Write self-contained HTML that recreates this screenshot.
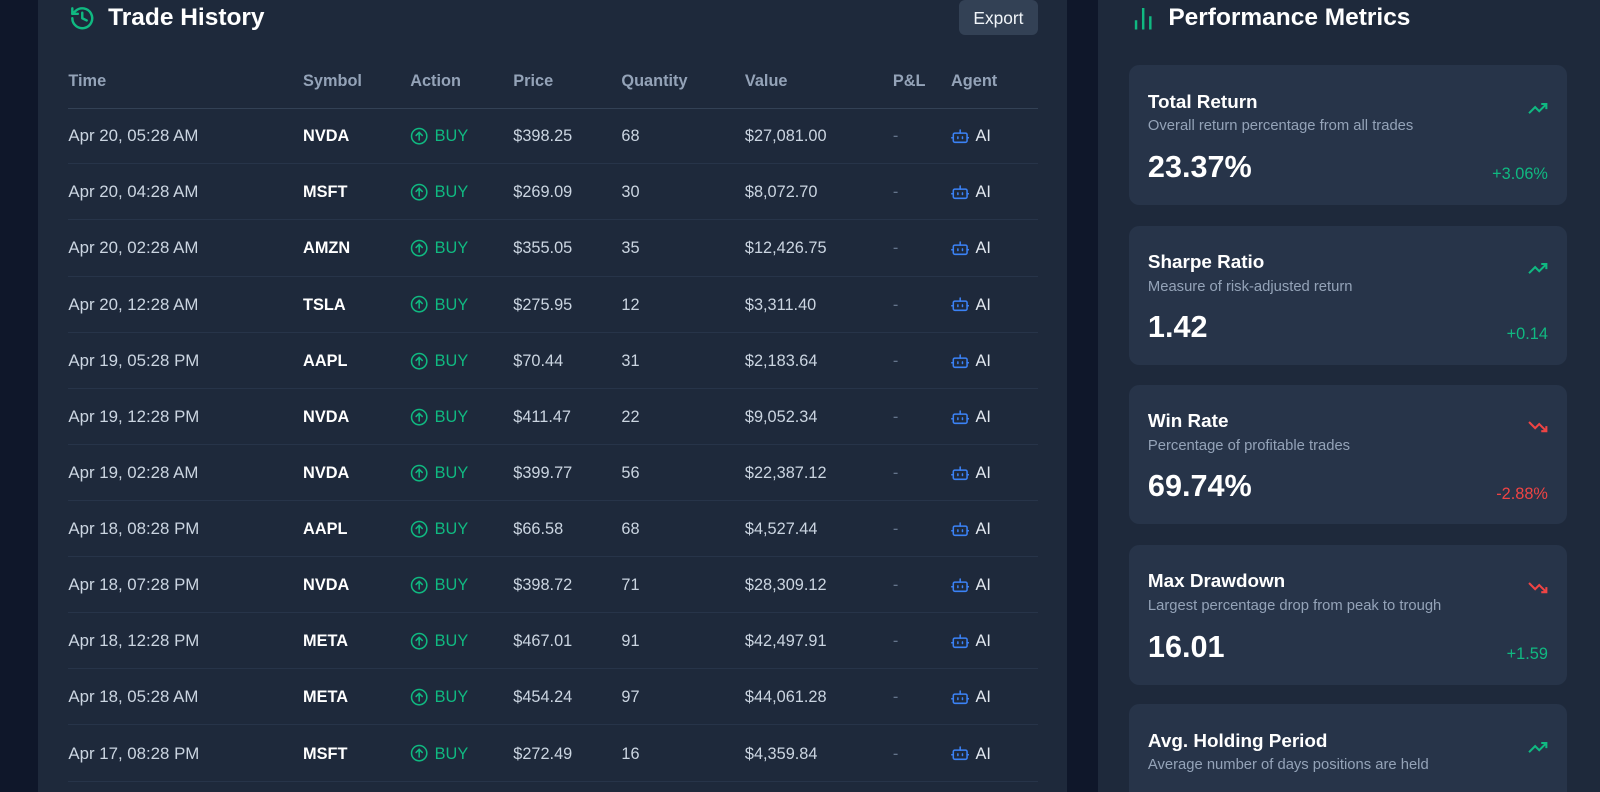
<!DOCTYPE html>
<html><head><meta charset="utf-8"><style>
*{box-sizing:border-box;margin:0;padding:0}
html,body{width:1600px;height:792px;overflow:hidden;background:#0f172a}
body{font-family:"Liberation Sans",sans-serif;color:#e2e8f0;position:relative}
#w{position:absolute;left:0;top:0;width:1568px;height:776px;zoom:1.0204;overflow:hidden}
.lp{position:absolute;left:37px;top:0;width:1009px;height:776px;background:#1e293b;overflow:hidden}
.rp{position:absolute;left:1076px;top:0;width:492px;height:776px;background:#1e293b;overflow:hidden}
h2{position:absolute;font-size:24px;font-weight:bold;color:#fff;top:4px}
.exp{position:absolute;left:903px;top:0;width:77px;height:34px;background:#334155;border-radius:6px;color:#f1f5f9;font-size:17px;text-align:center;line-height:36px}
.hd,.row{position:absolute;left:30px;width:950px;height:55px;font-size:16px}
.hd{top:52px;color:#94a3b8;font-weight:bold;border-bottom:1px solid #334155}
.row{border-bottom:1px solid #273449;color:#cbd5e1}
.c{position:absolute;top:0;line-height:55px;white-space:nowrap}
.t0{font-size:16.5px}
.sym{color:#fff;font-weight:bold}
.buy{color:#10b981;display:flex;align-items:center;gap:6px}
.ai{color:#e2e8f0;display:flex;align-items:center;gap:6px}
.pl{color:#64748b}
.card{position:absolute;left:30px;width:430px;height:137px;background:#273449;border-radius:10px}
.card .t{position:absolute;left:19px;top:25px;font-size:18.5px;font-weight:bold;color:#fff}
.card .s{position:absolute;left:19px;top:52px;font-size:14.5px;color:#94a3b8}
.card .v{position:absolute;left:19px;top:83px;font-size:30px;font-weight:bold;color:#fff}
.card .ch{position:absolute;right:19px;top:98px;font-size:16px}
.card svg{position:absolute;right:19px;top:36px}
</style></head><body><div id="w">
<div class="lp">
<svg style="position:absolute;left:31px;top:5px" width="26" height="26" viewBox="0 0 24 24" fill="none" stroke="#10b981" stroke-width="2.2" stroke-linecap="round" stroke-linejoin="round"><path d="M3 12a9 9 0 1 0 3-6.7L3 8"/><path d="M3 3v5h5"/><path d="M12 7v5l4 2"/></svg>
<h2 style="left:69px">Trade History</h2>
<div class="exp">Export</div>
<div class="hd"><span class="c" style="left:0">Time</span><span class="c" style="left:230px">Symbol</span><span class="c" style="left:335px">Action</span><span class="c" style="left:436px">Price</span><span class="c" style="left:542px">Quantity</span><span class="c" style="left:663px">Value</span><span class="c" style="left:808px">P&amp;L</span><span class="c" style="left:865px">Agent</span></div>
<div id="rows"></div>
</div>
<div class="rp">
<svg style="position:absolute;left:35px;top:6px" width="20" height="24" viewBox="0 0 20 24" stroke="#10b981" stroke-width="2.4"><path d="M2 14v9M9 2v21M16 10v13"/></svg>
<h2 style="left:69px">Performance Metrics</h2>
<div class="card" style="top:64px"><div class="t">Total Return</div><div class="s">Overall return percentage from all trades</div><div class="v">23.37%</div><div class="ch" style="color:#10b981">+3.06%</div><svg width="20" height="12" viewBox="0 0 20 12" fill="none" stroke="#10b981" stroke-width="2"><path d="M1 11l6-6 4 4 7-7M13 2h5v5"/></svg></div>
<div class="card" style="top:221px"><div class="t">Sharpe Ratio</div><div class="s">Measure of risk-adjusted return</div><div class="v">1.42</div><div class="ch" style="color:#10b981">+0.14</div><svg width="20" height="12" viewBox="0 0 20 12" fill="none" stroke="#10b981" stroke-width="2"><path d="M1 11l6-6 4 4 7-7M13 2h5v5"/></svg></div>
<div class="card" style="top:377px"><div class="t">Win Rate</div><div class="s">Percentage of profitable trades</div><div class="v">69.74%</div><div class="ch" style="color:#ef4444">-2.88%</div><svg width="20" height="12" viewBox="0 0 20 12" fill="none" stroke="#ef4444" stroke-width="2"><path d="M1 1l6 6 4-4 7 7M13 10h5V5"/></svg></div>
<div class="card" style="top:534px"><div class="t">Max Drawdown</div><div class="s">Largest percentage drop from peak to trough</div><div class="v">16.01</div><div class="ch" style="color:#10b981">+1.59</div><svg width="20" height="12" viewBox="0 0 20 12" fill="none" stroke="#ef4444" stroke-width="2"><path d="M1 1l6 6 4-4 7 7M13 10h5V5"/></svg></div>
<div class="card" style="top:690px"><div class="t">Avg. Holding Period</div><div class="s">Average number of days positions are held</div><svg width="20" height="12" viewBox="0 0 20 12" fill="none" stroke="#10b981" stroke-width="2"><path d="M1 11l6-6 4 4 7-7M13 2h5v5"/></svg></div>
</div>
</div>
<script>
const d=[["Apr 20, 05:28 AM","NVDA","$398.25","68","$27,081.00"],["Apr 20, 04:28 AM","MSFT","$269.09","30","$8,072.70"],["Apr 20, 02:28 AM","AMZN","$355.05","35","$12,426.75"],["Apr 20, 12:28 AM","TSLA","$275.95","12","$3,311.40"],["Apr 19, 05:28 PM","AAPL","$70.44","31","$2,183.64"],["Apr 19, 12:28 PM","NVDA","$411.47","22","$9,052.34"],["Apr 19, 02:28 AM","NVDA","$399.77","56","$22,387.12"],["Apr 18, 08:28 PM","AAPL","$66.58","68","$4,527.44"],["Apr 18, 07:28 PM","NVDA","$398.72","71","$28,309.12"],["Apr 18, 12:28 PM","META","$467.01","91","$42,497.91"],["Apr 18, 05:28 AM","META","$454.24","97","$44,061.28"],["Apr 17, 08:28 PM","MSFT","$272.49","16","$4,359.84"],["Apr 17, 06:28 PM","AAPL","$70.10","40","$2,804.00"]];
const up='<svg width="18" height="18" viewBox="0 0 24 24" fill="none" stroke="#10b981" stroke-width="2" stroke-linecap="round"><circle cx="12" cy="12" r="10"/><path d="M12 17V7M8 11l4-4 4 4"/></svg>';
const bot='<svg width="18" height="18" viewBox="0 0 24 24" fill="none" stroke="#3b82f6" stroke-width="2" stroke-linecap="round"><rect x="3" y="8" width="18" height="12" rx="2"/><path d="M12 8V4M9 13v2M15 13v2M1 14h2M21 14h2"/></svg>';
let h="";d.forEach((r,i)=>{h+=`<div class="row" style="top:${106+i*55}px"><span class="c t0" style="left:0">${r[0]}</span><span class="c sym" style="left:230px">${r[1]}</span><span class="c buy" style="left:335px">${up}BUY</span><span class="c" style="left:436px">${r[2]}</span><span class="c" style="left:542px">${r[3]}</span><span class="c" style="left:663px">${r[4]}</span><span class="c pl" style="left:808px">-</span><span class="c ai" style="left:865px">${bot}AI</span></div>`});
document.getElementById("rows").innerHTML=h;
</script>
</body></html>
